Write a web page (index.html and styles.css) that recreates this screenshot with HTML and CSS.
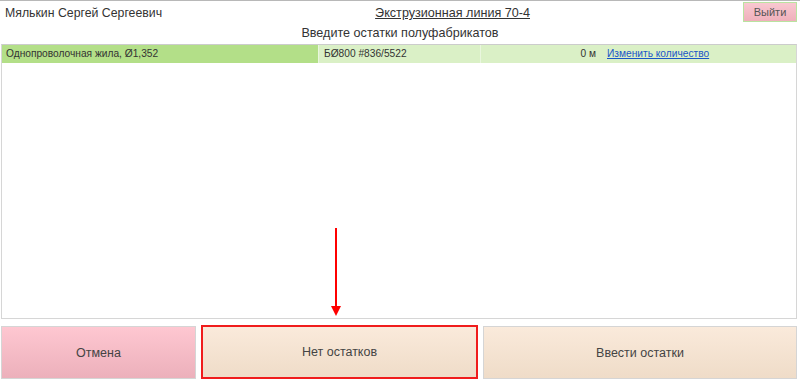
FILE: index.html
```html
<!DOCTYPE html>
<html lang="ru">
<head>
<meta charset="utf-8">
<link rel="stylesheet" href="styles.css">
</head>
<body>
<div class="page">
  <header class="header">
    <div class="user">Мялькин Сергей Сергеевич</div>
    <div class="line-title">Экструзионная линия 70-4</div>
    <button class="exit">Выйти</button>
  </header>
  <div class="subtitle">Введите остатки полуфабрикатов</div>
  <div class="table-box">
    <div class="row">
      <div class="cell c1">Однопроволочная жила, Ø1,352</div>
      <div class="cell c2">БØ800 #836/5522</div>
      <div class="cell c3">0 м</div>
      <div class="cell c4"><a href="#">Изменить количество</a></div>
    </div>
    <div class="arrow"></div>
  </div>
  <div class="buttons">
    <button class="btn cancel">Отмена</button>
    <button class="btn beige highlighted">Нет остатков</button>
    <button class="btn beige wide">Ввести остатки</button>
  </div>
</div>
</body>
</html>
```
FILE: styles.css
```css
* { box-sizing: border-box; }
html, body {
  margin: 0;
  padding: 0;
  background: #fff;
  width: 800px;
  height: 381px;
  overflow: hidden;
  font-family: "Liberation Sans", Arial, sans-serif;
  color: #333;
}
.page {
  border-top: 1px solid #b8b8b8;
  height: 381px;
  display: flex;
  flex-direction: column;
}
.header {
  display: flex;
  align-items: flex-start;
  height: 23px;
}
.user {
  font-size: 12.3px;
  padding: 5px 0 0 5px;
  color: #333;
  white-space: nowrap;
}
.line-title {
  flex: 1;
  text-align: center;
  font-size: 12.6px;
  padding-top: 5px;
  text-decoration: underline;
  color: #333;
}
.exit {
  font-family: inherit;
  font-size: 11px;
  color: #555;
  width: 54px;
  height: 20px;
  margin: 1px 3px 0 0;
  border: 1px solid #b9e3a0;
  background: linear-gradient(#f9c8d0, #efb0bb);
  padding: 0;
}
.subtitle {
  text-align: center;
  font-size: 12.6px;
  height: 20px;
  padding-top: 2px;
}
.table-box {
  position: relative;
  margin: 0 3px 0 1px;
  height: 275px;
  border: 1px solid #d6d6d6;
  border-top-color: #ccc;
}
.row {
  display: flex;
  height: 18px;
  font-size: 10.2px;
  line-height: 18px;
  color: #333;
  background: #daf0c6;
}
.cell { white-space: nowrap; }
.c1 { width: 316px; background: #b3df88; padding-left: 4px; }
.c2 { width: 162px; padding-left: 5px; border-left: 1px solid #e9f6de; }
.c3 { width: 119px; text-align: right; padding-right: 3px; border-left: 1px solid #e9f6de; }
.c4 { padding-left: 8px; }
.c4 a { color: #1a56c8; text-decoration: underline; }
.arrow {
  position: absolute;
  left: 333px;
  top: 183px;
  width: 2px;
  height: 78px;
  background: #f00;
}
.arrow::after {
  content: "";
  position: absolute;
  left: -4px;
  bottom: -10px;
  border-left: 5px solid transparent;
  border-right: 5px solid transparent;
  border-top: 10px solid #f00;
}
.buttons {
  display: flex;
  gap: 5px;
  margin: 7px 3px 0 1px;
  height: 54px;
}
.btn {
  font-family: inherit;
  font-size: 12.5px;
  color: #444;
  border: 1px solid #d5d5d5;
  padding: 0;
  height: 53px;
}
.cancel {
  width: 195px;
  background: linear-gradient(#fec7d1, #ecb0bb);
}
.beige {
  background: linear-gradient(#faeadb, #efdcc8);
}
.highlighted {
  width: 277px;
  border: 2px solid #f01c1c;
  height: 54px;
  margin-top: -1px;
}
.wide { flex: 1; }
```
